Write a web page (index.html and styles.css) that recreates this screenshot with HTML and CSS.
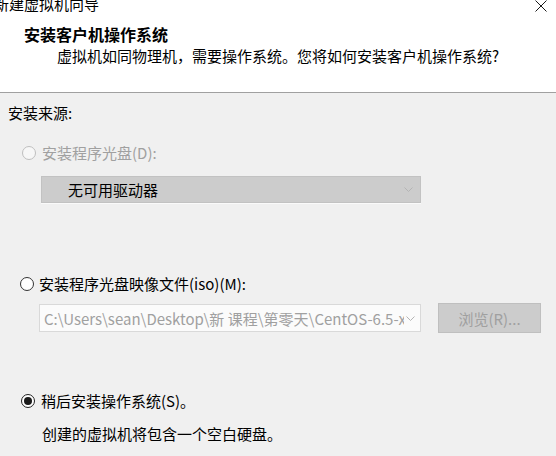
FILE: index.html
```html
<!DOCTYPE html>
<html lang="zh-CN">
<head>
<meta charset="utf-8">
<link rel="stylesheet" href="styles.css">
</head>
<body>
<div class="header">
  <div class="titlebar">
    <span class="title">新建虚拟机向导</span>
    <svg class="close" width="12" height="12" viewBox="0 0 12 12"><path d="M0.5 0.5 L11.5 11.5 M11.5 0.5 L0.5 11.5" stroke="#1a1a1a" stroke-width="1" fill="none"/></svg>
  </div>
  <div class="heading">安装客户机操作系统</div>
  <div class="subtitle">虚拟机如同物理机，需要操作系统。您将如何安装客户机操作系统?</div>
</div>
<div class="content">
  <div class="label">安装来源:</div>
  <div class="option opt1 disabled"><span class="radio"></span><span>安装程序光盘(D):</span></div>
  <div class="select dis-select">
    <span class="select-text">无可用驱动器</span>
    <svg class="chev" width="9" height="5" viewBox="0 0 9 5"><path d="M0.5 0.5 L4.5 4.5 L8.5 0.5" stroke="#b4b4b4" fill="none"/></svg>
  </div>
  <div class="option opt2"><span class="radio"></span><span>安装程序光盘映像文件(iso)(M):</span></div>
  <div class="combo-row">
    <div class="select combo">
      <span class="combo-text">C:\Users\sean\Desktop\新 课程\第零天\CentOS-6.5-x</span>
      <svg class="chev" width="9" height="5" viewBox="0 0 9 5"><path d="M0.5 0.5 L4.5 4.5 L8.5 0.5" stroke="#b4b4b4" fill="none"/></svg>
    </div>
    <div class="button">浏览(R)...</div>
  </div>
  <div class="option opt3"><span class="radio checked"></span><span>稍后安装操作系统(S)。</span></div>
  <div class="note">创建的虚拟机将包含一个空白硬盘。</div>
</div>
</body>
</html>
```
FILE: styles.css
```css
html, body {
  margin: 0;
  padding: 0;
}
body {
  width: 556px;
  height: 456px;
  overflow: hidden;
  background: #f0f0f0;
  font-family: "Noto Sans CJK SC", "Noto Sans", sans-serif;
  font-size: 15px;
  color: #000;
}
.header {
  background: #ffffff;
  height: 92px;
  border-bottom: 1px solid #a0a0a0;
  box-sizing: content-box;
  overflow: hidden;
}
.titlebar {
  display: flex;
  justify-content: space-between;
  align-items: flex-start;
  margin-top: -6px;
  height: 20px;
  line-height: 20px;
  padding-right: 9px;
}
.title {
  margin-left: -6px;
  font-size: 15px;
}
.close {
  margin-top: 6px;
  display: block;
}
.heading {
  margin-top: 10px;
  margin-left: 24px;
  font-size: 16px;
  font-weight: bold;
  line-height: 20px;
}
.subtitle {
  margin-top: 2px;
  margin-left: 57px;
  line-height: 20px;
}
.content {
  padding-left: 8px;
}
.label {
  padding-top: 10px;
  line-height: 20px;
}
.option {
  display: flex;
  align-items: center;
  line-height: 20px;
  height: 20px;
}
.radio {
  width: 12px;
  height: 12px;
  border-radius: 50%;
  border: 1px solid #333;
  background: #fff;
  display: inline-flex;
  align-items: center;
  justify-content: center;
  flex: none;
}
.opt1 {
  margin-top: 20px;
  padding-left: 14px;
  gap: 6px;
}
.disabled {
  color: #a0a0a0;
}
.disabled .radio {
  border-color: #bfbfbf;
  background: #f7f7f7;
}
.select {
  display: flex;
  align-items: center;
  justify-content: space-between;
  box-sizing: border-box;
}
.dis-select {
  margin-top: 13px;
  margin-left: 33px;
  width: 380px;
  height: 27px;
  background: #cccccc;
  border: 1px solid #c2c2c2;
  box-shadow: 0 1px 0 #fafafa;
  padding: 0 7px 0 26px;
}
.opt2 {
  margin-top: 71px;
  padding-left: 12px;
  gap: 5px;
}
.combo-row {
  margin-top: 9px;
  display: flex;
  align-items: center;
  gap: 17px;
  height: 30px;
}
.combo {
  margin-left: 31px;
  width: 382px;
  height: 28px;
  background: #fbfbfb;
  border: 1px solid #d9d9d9;
  padding: 0 5px 0 4px;
}
.combo-text {
  color: #a0a0a0;
  white-space: nowrap;
  overflow: hidden;
  width: 360px;
}
.button {
  width: 103px;
  height: 30px;
  box-sizing: border-box;
  background: #cccccc;
  border: 1px solid #bfbfbf;
  color: #a0a0a0;
  display: flex;
  align-items: center;
  justify-content: center;
}
.opt3 {
  margin-top: 58px;
  padding-left: 13px;
  gap: 6px;
}
.radio.checked {
  border-color: #222;
}
.radio.checked::after {
  content: "";
  width: 8px;
  height: 8px;
  border-radius: 50%;
  background: #1a1a1a;
}
.note {
  margin-top: 13px;
  padding-left: 34px;
  line-height: 20px;
}
.chev {
  display: block;
  flex: none;
}
```
